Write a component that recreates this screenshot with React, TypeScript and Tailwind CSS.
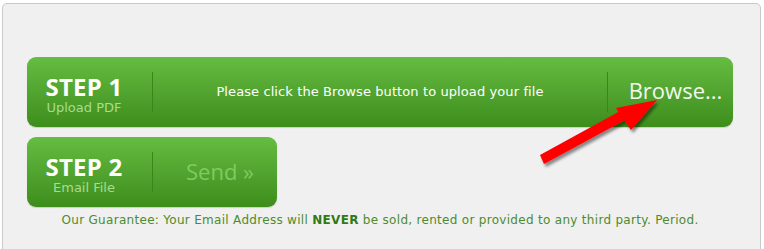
import React from 'react';

const bar =
  'flex items-center h-[70px] rounded-[9px] bg-gradient-to-b from-[#66bd42] to-[#3d8d1b] shadow-[0_1px_1px_rgba(0,0,0,0.15)]';

function Divider() {
  return <div className="w-px h-[40px] bg-[#3a8618] shrink-0" />;
}

function StepLabel({ title, sub }: { title: string; sub: string }) {
  return (
    <div className="w-[125px] shrink-0 flex flex-col items-center pr-[11px] pt-[6px] leading-none">
      <span className="font-['Open_Sans',sans-serif] font-bold text-[24px] text-white tracking-[0.2px] leading-[24px]">
        {title}
      </span>
      <span className="font-['DejaVu_Sans',sans-serif] text-[13px] text-[#a9dc8e] leading-[16px] mt-[1px]">{sub}</span>
    </div>
  );
}

function Arrow() {
  return (
    <svg className="absolute left-0 top-0 pointer-events-none" width="764" height="249" viewBox="0 0 764 249">
      <defs>
        <filter id="sh" x="-20%" y="-20%" width="140%" height="140%">
          <feGaussianBlur in="SourceAlpha" stdDeviation="1.5" />
          <feOffset dx="2" dy="3" result="b" />
          <feComponentTransfer>
            <feFuncA type="linear" slope="0.45" />
          </feComponentTransfer>
          <feMerge>
            <feMergeNode />
            <feMergeNode in="SourceGraphic" />
          </feMerge>
        </filter>
      </defs>
      <g filter="url(#sh)" fill="#ff0000">
        <polygon points="540,155 622,110 627,119 544,164" />
        <polygon points="657,100 616,108 631,130" />
      </g>
    </svg>
  );
}

export default function App() {
  return (
    <div className="relative w-[764px] h-[249px] overflow-hidden bg-white">
      <div className="pt-[3px] pl-[2px]">
        <div className="w-[759px] h-[270px] border border-[#c9c9c9] rounded-[5px] bg-[#f0f0f0] pt-[53px] pl-[24px]">
          <div className={bar + ' w-[706px]'}>
            <StepLabel title="STEP 1" sub="Upload PDF" />
            <Divider />
            <div className="flex-1 text-center font-['DejaVu_Sans',sans-serif] text-[13px] tracking-[0.1px] text-white">
              Please click the Browse button to upload your file
            </div>
            <Divider />
            <div className="w-[125px] text-center font-['Open_Sans',sans-serif] text-[22px] text-[#f2f8ee] pl-[10px] pb-[4px]">
              Browse...
            </div>
          </div>
          <div className={bar + ' w-[250px] mt-[10px]'}>
            <StepLabel title="STEP 2" sub="Email File" />
            <Divider />
            <div className="flex-1 text-center font-['Open_Sans',sans-serif] text-[22px] text-[#7fcb5e] pl-[10px] pb-[2px]">
              Send »
            </div>
          </div>
          <p className="w-[706px] text-center mt-[4px] font-['DejaVu_Sans',sans-serif] text-[12px] tracking-[0.3px] text-[#4d8c2c]">
            Our Guarantee: Your Email Address will <b className="text-[#2f7a12]">NEVER</b> be sold, rented or provided to
            any third party. Period.
          </p>
        </div>
      </div>
      <Arrow />
    </div>
  );
}
